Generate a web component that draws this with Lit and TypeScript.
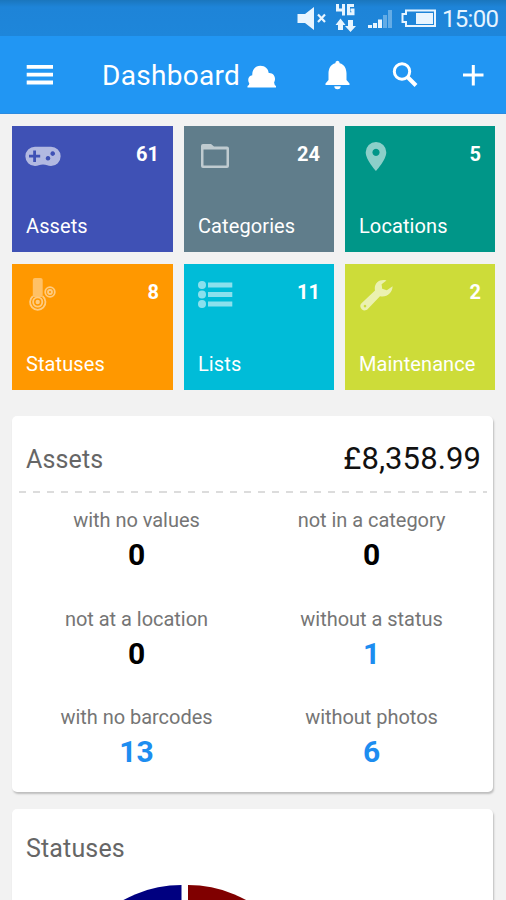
import { LitElement, html, css, svg } from "lit";
import { customElement } from "lit/decorators.js";
import { styleMap } from "lit/directives/style-map.js";

const gamepad = svg`<path fill-rule="evenodd" d="M11 10.7H27A9.4 9.4 0 0 1 27 30C24 30 22.5 28.5 19 28.5S14 30 11 30A9.6 9.6 0 0 1 11 10.7ZM9.2 14.5V18.8H5V21.6H9.2V26H12V21.6H16.2V18.8H12V14.5ZM28.7 15.3a2.3 2.3 0 1 0 .01 0ZM24 20a2.3 2.3 0 1 0 .01 0Z"/>`;
const folder = svg`<path fill-rule="evenodd" d="M7 8H15L18 10.500H31Q33 10.500 33 12.500V30Q33 32 31 32H7Q5 32 5 30V10Q5 8 7 8ZM7.500 13.500V29.500H30.500V13.500Z"/>`;
const pin = svg`<path fill-rule="evenodd" d="M19 6A10.300 10.300 0 0 1 29.300 16.300C29.300 24 19 35 19 35S8.700 24 8.700 16.300A10.300 10.300 0 0 1 19 6ZM19 12.800a3.600 3.600 0 1 0 .01 0Z"/>`;
const thermometer = svg`
  <path d="M8.800 6Q8.800 4 11 4H16.500Q18.700 4 18.700 6V23H8.800Z" opacity=".8"/>
  <g fill="none" stroke="#fff" stroke-width="1.800">
    <path d="M8.800 22.300A7.700 7.700 0 1 0 18.700 22.300"/>
    <circle cx="13.700" cy="28" r="4.600"/>
    <circle cx="26" cy="18" r="4.800"/><circle cx="26" cy="18" r="2"/>
  </g><circle cx="13.700" cy="28" r="2.200"/>`;
const list = svg`
  <circle cx="6" cy="11" r="4"/><circle cx="6" cy="20.500" r="4"/><circle cx="6" cy="30" r="4"/>
  <path d="M12 8.500H36.300V13.500H12ZM12 18H36.300V23H12ZM12 27.500H36.300V32.500H12Z"/>`;
const wrench = svg`<path fill-rule="evenodd" d="M29.500 6.500C22.500 4.500 16.500 9.500 18 16.500L4.500 29.200C2.800 31 2.800 33.200 4.700 35.200C6.700 37 9 36.800 10.800 35L23 22.200C29.500 23.800 35.600 19 35.600 12.300L29.800 16.200L25.200 14.800L24.600 10.300ZM8 30.800a1.300 1.300 0 1 0 .01 0Z"/>`;

const tiles = [
  { label: "Assets", count: 61, color: "#3f51b5", icon: gamepad, alpha: 0.6 },
  { label: "Categories", count: 24, color: "#607d8b", icon: folder, alpha: 0.6 },
  { label: "Locations", count: 5, color: "#009688", icon: pin, alpha: 0.55 },
  { label: "Statuses", count: 8, color: "#ff9800", icon: thermometer, alpha: 0.5 },
  { label: "Lists", count: 11, color: "#00bcd8", icon: list, alpha: 0.55 },
  { label: "Maintenance", count: 2, color: "#cddc39", icon: wrench, alpha: 0.6 },
];

const stats = [
  { label: "with no values", value: 0 },
  { label: "not in a category", value: 0 },
  { label: "not at a location", value: 0 },
  { label: "without a status", value: 1 },
  { label: "with no barcodes", value: 13 },
  { label: "without photos", value: 6 },
];

@customElement("app-root")
export class AppRoot extends LitElement {
  static styles = css`
    :host { display: block; width: 506px; height: 900px; overflow: hidden; background: #f2f2f2; font-family: Roboto, sans-serif; }
    * { box-sizing: border-box; }
    svg { display: block; flex: none; }
    .status { height: 36px; background: linear-gradient(#1a76bd, #1e84d8 7px, #1e86da); display: flex; justify-content: flex-end; padding-right: 8px; color: #e6f4ff; }
    .clock { font-size: 24px; line-height: 38px; width: 56px; white-space: nowrap; letter-spacing: -0.7px; }
    .bar { height: 78px; background: #2196f3; border-bottom: 1px solid #2b8be0; display: flex; align-items: center; color: #fff; padding-left: 26px; }
    .title { font-size: 28px; line-height: 36px; width: 138px; margin: 3px 7px 0 48px; white-space: nowrap; letter-spacing: 0.3px; }
    .bell { margin-left: 48px; }
    .search { margin-left: 41px; }
    .plus { margin-left: 44px; }
    .tiles { display: grid; grid-template-columns: 161px 150px 150px; grid-auto-rows: 126px; gap: 12px 11px; padding: 12px 0 0 12px; }
    .tile { display: flex; flex-direction: column; justify-content: space-between; padding: 10px 14px 13px 12px; color: #fff; }
    .top { display: flex; justify-content: space-between; }
    .count { font-size: 20px; line-height: 24px; font-weight: 700; margin-top: 6px; }
    .name { font-size: 20px; line-height: 26px; padding-left: 2px; white-space: nowrap; letter-spacing: 0.1px; }
    .card { width: 481px; margin-left: 12px; background: #fff; border-radius: 5px; box-shadow: 1px 2px 2px #bdbdbd; }
    .assets { margin-top: 26px; height: 376px; }
    .statuses { margin-top: 17px; height: 200px; }
    .head { display: flex; justify-content: space-between; align-items: center; height: 75px; padding: 11px 12px 0 14px; }
    .statuses .head { padding-top: 5px; }
    .heading { font-size: 25px; line-height: 32px; color: #666; letter-spacing: 0.15px; }
    .assets .heading { margin-top: 1px; }
    .total { font-size: 31px; line-height: 34px; color: #111; letter-spacing: 0.1px; }
    .rule { height: 2px; margin: 0 6px 0 7px; background: repeating-linear-gradient(90deg, #dcdcdc 0 7px, transparent 7px 14.050px); }
    .stats { display: grid; grid-template-columns: 235px 235px; grid-auto-rows: 98.500px; padding: 14px 0 0 7px; text-align: center; }
    .label { font-size: 20px; line-height: 26px; color: #757575; white-space: nowrap; letter-spacing: -0.03px; }
    .value { font-size: 30px; line-height: 36px; margin-top: 4px; font-weight: 700; color: #000; }
    .link { color: #1d8df0; }
  `;

  render() {
    return html`
      <div class="status">
        <svg width="146" height="36" viewBox="296 0 146 36" fill="#e8f5ff">
          <path d="M297.500 14H305L314 7V30L305 23H297.500Z"/>
          <path d="M318 14.500L325 22M325 14.500L318 22" stroke="#e8f5ff" stroke-width="2.200"/>
          <g fill="none" stroke="#e8f5ff" stroke-width="3"><path d="M337.500 4V10H343M343.500 4V15.500M354 5.500H348.500V13.800H353V10H350.500"/></g>
          <path d="M335.500 25L340.500 18.500L345.500 25H343V30H338V25ZM345 26H348V20H353V26H356L350.500 32Z"/>
          <path d="M368 25H372V28H368ZM373 23H377V28H373ZM378 19.500H382V28H378Z"/>
          <path d="M383 15H387V28H383ZM388 10H392V28H388Z" opacity=".35"/>
          <path d="M406 10.500H435V26H406V22H402.500V14H406Z" fill="none" stroke="#e8f5ff" stroke-width="2"/>
          <path d="M416 13H433V24H416Z"/>
        </svg>
        <div class="clock">15:00</div>
      </div>
      <div class="bar">
        <svg width="28" height="24" viewBox="0 0 28 24" fill="#fff"><path d="M.7 2H27V5.800H.7ZM.7 9.800H27V13.600H.7ZM.7 17.600H27V21.400H.7Z"/></svg>
        <div class="title">Dashboard</div>
        <svg width="29" height="26" viewBox="247.500 61 29 26" fill="#fff"><path d="M248 86.500V85Q249.800 84 249.800 82.500C247.500 79 249 74.500 252.800 74.300C252.300 68.500 256 64.700 260.800 64.700C265.800 64.700 269 68.200 269.200 72C274.500 71.500 277 77 274.600 81.500Q274.800 84 276.500 85V86.500Z"/></svg>
        <svg class="bell" width="26" height="32" viewBox="324.500 59.500 26 32" fill="#fff"><path d="M338 61.200Q340.200 61.200 340.200 63.800C345 65 347 69.500 347 74V80.500L350 84V85.500H326V84L329 80.500V74C329 69.500 331 65 335.800 63.800Q335.800 61.200 338 61.200ZM334.800 86.800H341.200A3.200 3 0 0 1 334.800 86.800Z"/></svg>
        <svg class="search" width="28" height="30" viewBox="391 60 28 30" fill="none" stroke="#fff"><circle cx="402" cy="71.500" r="7.700" stroke-width="3"/><path d="M407.500 77L416 85.500" stroke-width="4"/></svg>
        <svg class="plus" width="24" height="24" viewBox="0 0 24 24" fill="none" stroke="#fff" stroke-width="3"><path d="M0 12H20.500M10.300 2V22.500" /></svg>
      </div>
      <div class="tiles">
        ${tiles.map((t) => html`
          <div class="tile" style=${styleMap({ background: t.color })}>
            <div class="top">
              <svg width="40" height="40" viewBox="0 0 40 40" fill="#fff" opacity=${t.alpha}>${t.icon}</svg>
              <div class="count">${t.count}</div>
            </div>
            <div class="name">${t.label}</div>
          </div>`)}
      </div>
      <div class="card assets">
        <div class="head"><div class="heading">Assets</div><div class="total">£8,358.99</div></div>
        <div class="rule"></div>
        <div class="stats">
          ${stats.map((s) => html`<div><div class="label">${s.label}</div><div class="value ${s.value ? "link" : ""}">${s.value}</div></div>`)}
        </div>
      </div>
      <div class="card statuses">
        <div class="head"><div class="heading">Statuses</div></div>
        <svg width="481" height="20" viewBox="12 884 481 20">
          <path d="M181.500 1005V885A120 120 0 0 0 61.500 1005Z" fill="#000080"/>
          <path d="M188 1005V885A120 120 0 0 1 308 1005Z" fill="#800000"/>
        </svg>
      </div>`;
  }
}
